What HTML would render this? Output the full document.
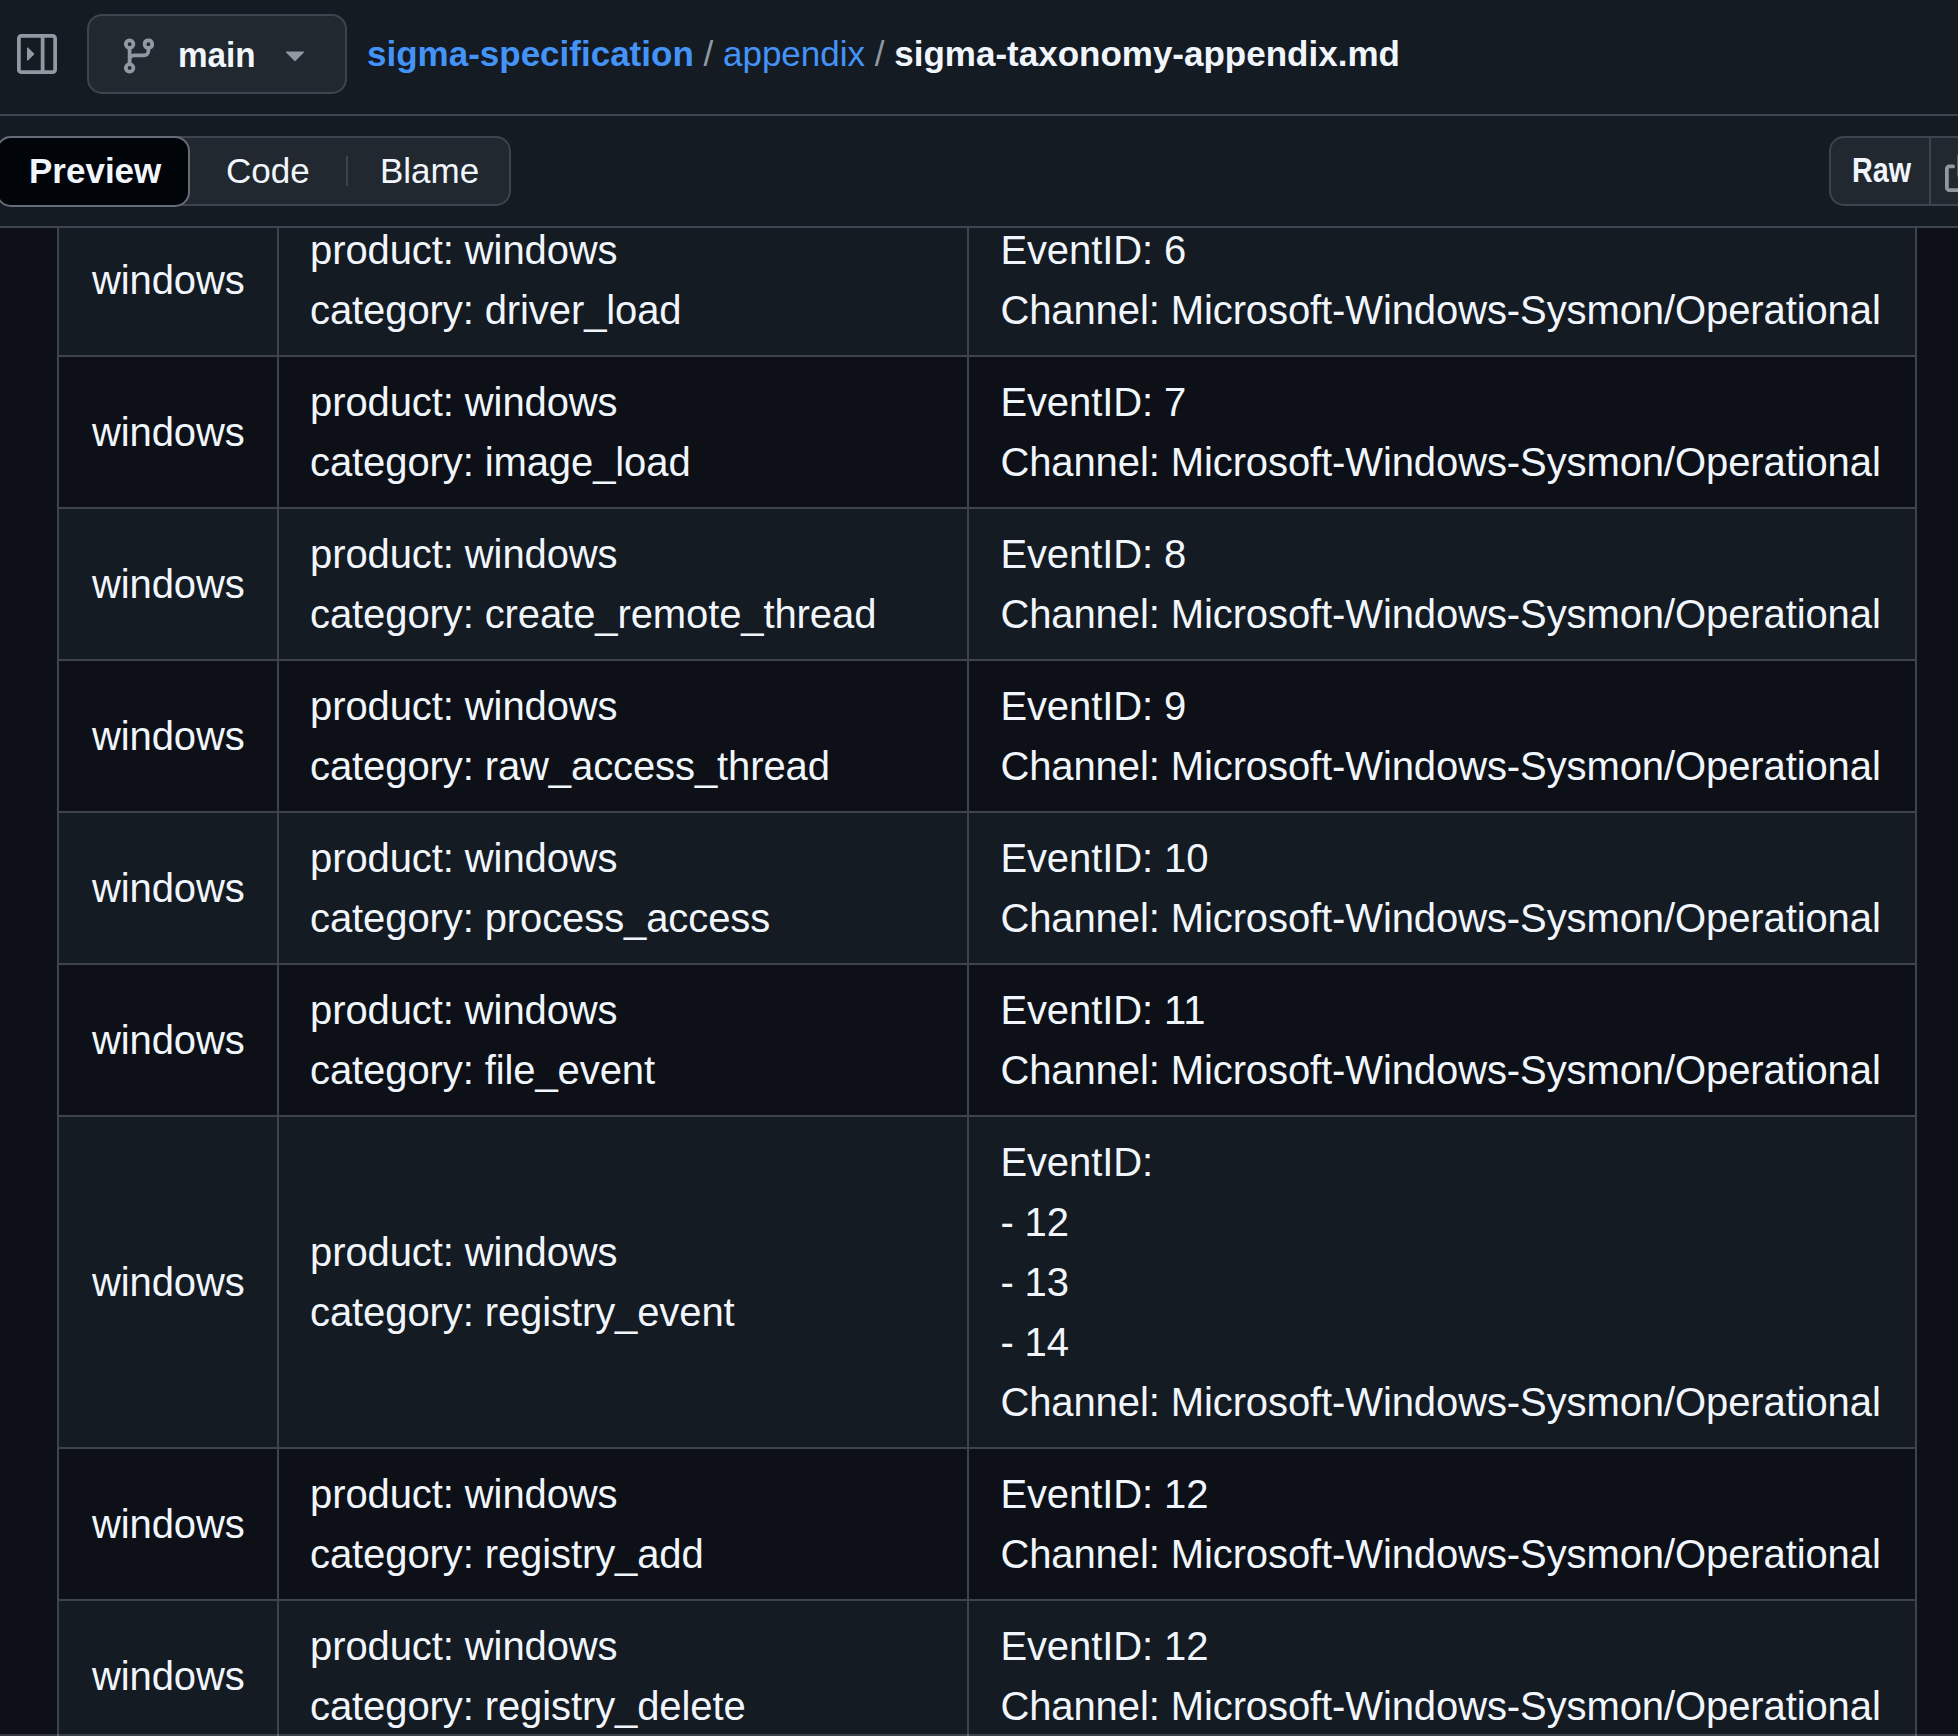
<!DOCTYPE html>
<html><head><meta charset="utf-8">
<style>
html,body{margin:0;padding:0;}
body{width:1958px;height:1736px;overflow:hidden;background:#0d1117;position:relative;font-family:"Liberation Sans",sans-serif;color:#f0f6fc;}
.hdr{position:absolute;left:0;top:0;width:1958px;height:228px;background:#151b23;z-index:5;}
.line1{position:absolute;left:0;top:114px;width:1958px;height:2px;background:#3d444d;}
.line2{position:absolute;left:0;top:226px;width:1958px;height:2px;background:#3d444d;}
.ico{position:absolute;fill:#9198a1;}
.branch{position:absolute;left:87px;top:14px;width:256px;height:76px;border:2px solid #3d444d;border-radius:15px;background:#212830;}
.txt{position:absolute;white-space:nowrap;line-height:1;}
.seg{position:absolute;left:-4px;top:136px;width:511px;height:66px;border:2px solid #3d444d;border-radius:15px;background:#212830;}
.sel{position:absolute;left:-4px;top:136px;width:190px;height:67px;border:2px solid #656c76;border-radius:15px;background:#010409;}
.sep{position:absolute;left:346px;top:156px;width:2px;height:30px;background:#3d444d;}
.raw{position:absolute;left:1829px;top:136px;width:200px;height:66px;border:2px solid #3d444d;border-radius:15px;background:#212830;}
table{position:absolute;left:57px;top:203px;width:1860px;border-collapse:separate;border-spacing:0;table-layout:fixed;}
td{border-left:2px solid #3d444d;border-top:2px solid #3d444d;padding:15px 33px 15px 31px;font-size:40px;line-height:60px;vertical-align:middle;white-space:nowrap;letter-spacing:-0.1px;}
td.c1{padding-left:33px;}
td.c3{border-right:2px solid #3d444d;}
tr.s td{background:#151b23;}
tr.d td{background:#0d1117;}
</style></head><body>
<div class="hdr">
  <svg class="ico" style="left:17px;top:34px" width="40" height="40" viewBox="0 0 16 16"><path d="M6.823 7.823a.25.25 0 0 1 0 .354l-2.396 2.396A.25.25 0 0 1 4 10.396V5.604a.25.25 0 0 1 .427-.177Z"/><path d="M1.75 0h12.5C15.216 0 16 .784 16 1.75v12.5A1.75 1.75 0 0 1 14.25 16H1.75A1.75 1.75 0 0 1 0 14.25V1.75C0 .784.784 0 1.75 0ZM1.5 1.75v12.5c0 .138.112.25.25.25H9.5v-13H1.75a.25.25 0 0 0-.25.25ZM11 14.5h3.25a.25.25 0 0 0 .25-.25V1.75a.25.25 0 0 0-.25-.25H11Z"/></svg>
  <div class="branch"></div>
  <svg class="ico" style="left:119px;top:36px" width="40" height="40" viewBox="0 0 16 16"><path d="M9.5 3.25a2.25 2.25 0 1 1 3 2.122V6A2.5 2.5 0 0 1 10 8.5H6a1 1 0 0 0-1 1v1.128a2.251 2.251 0 1 1-1.5 0V5.372a2.25 2.25 0 1 1 1.5 0v1.836A2.493 2.493 0 0 1 6 7h4a1 1 0 0 0 1-1v-.628A2.25 2.25 0 0 1 9.5 3.25Zm-6 0a.75.75 0 1 0 1.5 0 .75.75 0 0 0-1.5 0Zm8.25-.75a.75.75 0 1 0 0 1.5.75.75 0 0 0 0-1.5ZM4.25 12a.75.75 0 1 0 0 1.5.75.75 0 0 0 0-1.5Z"/></svg>
  <div class="txt" style="left:178px;top:37px;font-size:35px;font-weight:bold;transform:scaleX(.95);transform-origin:0 0;">main</div>
  <svg class="ico" style="left:275px;top:34px" width="40" height="40" viewBox="0 0 16 16"><path d="m4.427 7.427 3.396 3.396a.25.25 0 0 0 .354 0l3.396-3.396A.25.25 0 0 0 11.396 7H4.604a.25.25 0 0 0-.177.427Z"/></svg>
  <div class="txt" style="left:367px;top:36px;font-size:35px;"><b style="color:#4493f8">sigma-specification</b> <span style="color:#9198a1">/</span> <span style="color:#4493f8">appendix</span> <span style="color:#9198a1">/</span> <b>sigma-taxonomy-appendix.md</b></div>
  <div class="line1"></div>
  <div class="seg"></div>
  <div class="sel"></div>
  <div class="sep"></div>
  <div class="txt" style="left:29px;top:153px;font-size:35px;font-weight:bold;">Preview</div>
  <div class="txt" style="left:226px;top:153px;font-size:35px;">Code</div>
  <div class="txt" style="left:380px;top:153px;font-size:35px;">Blame</div>
  <div class="raw"></div>
  <div class="txt" style="left:1852px;top:152px;font-size:35px;font-weight:bold;transform:scaleX(.82);transform-origin:0 0;">Raw</div>
  <div style="position:absolute;left:1929px;top:138px;width:2px;height:66px;background:#3d444d"></div>
  <svg class="ico" style="left:1945px;top:152px" width="40" height="40" viewBox="0 0 16 16"><path d="M0 6.75C0 5.784.784 5 1.75 5h1.5a.75.75 0 0 1 0 1.5h-1.5a.25.25 0 0 0-.25.25v7.5c0 .138.112.25.25.25h7.5a.25.25 0 0 0 .25-.25v-1.5a.75.75 0 0 1 1.5 0v1.5A1.75 1.75 0 0 1 9.25 16h-7.5A1.75 1.75 0 0 1 0 14.25Z"/><path d="M5 1.75C5 .784 5.784 0 6.75 0h7.5C15.216 0 16 .784 16 1.75v7.5A1.75 1.75 0 0 1 14.25 11h-7.5A1.75 1.75 0 0 1 5 9.25Zm1.75-.25a.25.25 0 0 0-.25.25v7.5c0 .138.112.25.25.25h7.5a.25.25 0 0 0 .25-.25v-7.5a.25.25 0 0 0-.25-.25Z"/></svg>
  <div class="line2"></div>
</div>
<table>
<colgroup><col style="width:219px"><col style="width:687px"><col style="width:945px"></colgroup>
<tr class="s"><td class="c1">windows</td><td>product: windows<br>category: driver_load</td><td class="c3">EventID: 6<br>Channel: Microsoft-Windows-Sysmon/Operational</td></tr>
<tr class="d"><td class="c1">windows</td><td>product: windows<br>category: image_load</td><td class="c3">EventID: 7<br>Channel: Microsoft-Windows-Sysmon/Operational</td></tr>
<tr class="s"><td class="c1">windows</td><td>product: windows<br>category: create_remote_thread</td><td class="c3">EventID: 8<br>Channel: Microsoft-Windows-Sysmon/Operational</td></tr>
<tr class="d"><td class="c1">windows</td><td>product: windows<br>category: raw_access_thread</td><td class="c3">EventID: 9<br>Channel: Microsoft-Windows-Sysmon/Operational</td></tr>
<tr class="s"><td class="c1">windows</td><td>product: windows<br>category: process_access</td><td class="c3">EventID: 10<br>Channel: Microsoft-Windows-Sysmon/Operational</td></tr>
<tr class="d"><td class="c1">windows</td><td>product: windows<br>category: file_event</td><td class="c3">EventID: 11<br>Channel: Microsoft-Windows-Sysmon/Operational</td></tr>
<tr class="s"><td class="c1">windows</td><td>product: windows<br>category: registry_event</td><td class="c3">EventID:<br>- 12<br>- 13<br>- 14<br>Channel: Microsoft-Windows-Sysmon/Operational</td></tr>
<tr class="d"><td class="c1">windows</td><td>product: windows<br>category: registry_add</td><td class="c3">EventID: 12<br>Channel: Microsoft-Windows-Sysmon/Operational</td></tr>
<tr class="s"><td class="c1">windows</td><td>product: windows<br>category: registry_delete</td><td class="c3">EventID: 12<br>Channel: Microsoft-Windows-Sysmon/Operational</td></tr>
</table>
<div style="position:absolute;left:0;top:1734px;width:1958px;height:2px;background:rgba(255,255,255,0.17);z-index:6"></div>
</body></html>
